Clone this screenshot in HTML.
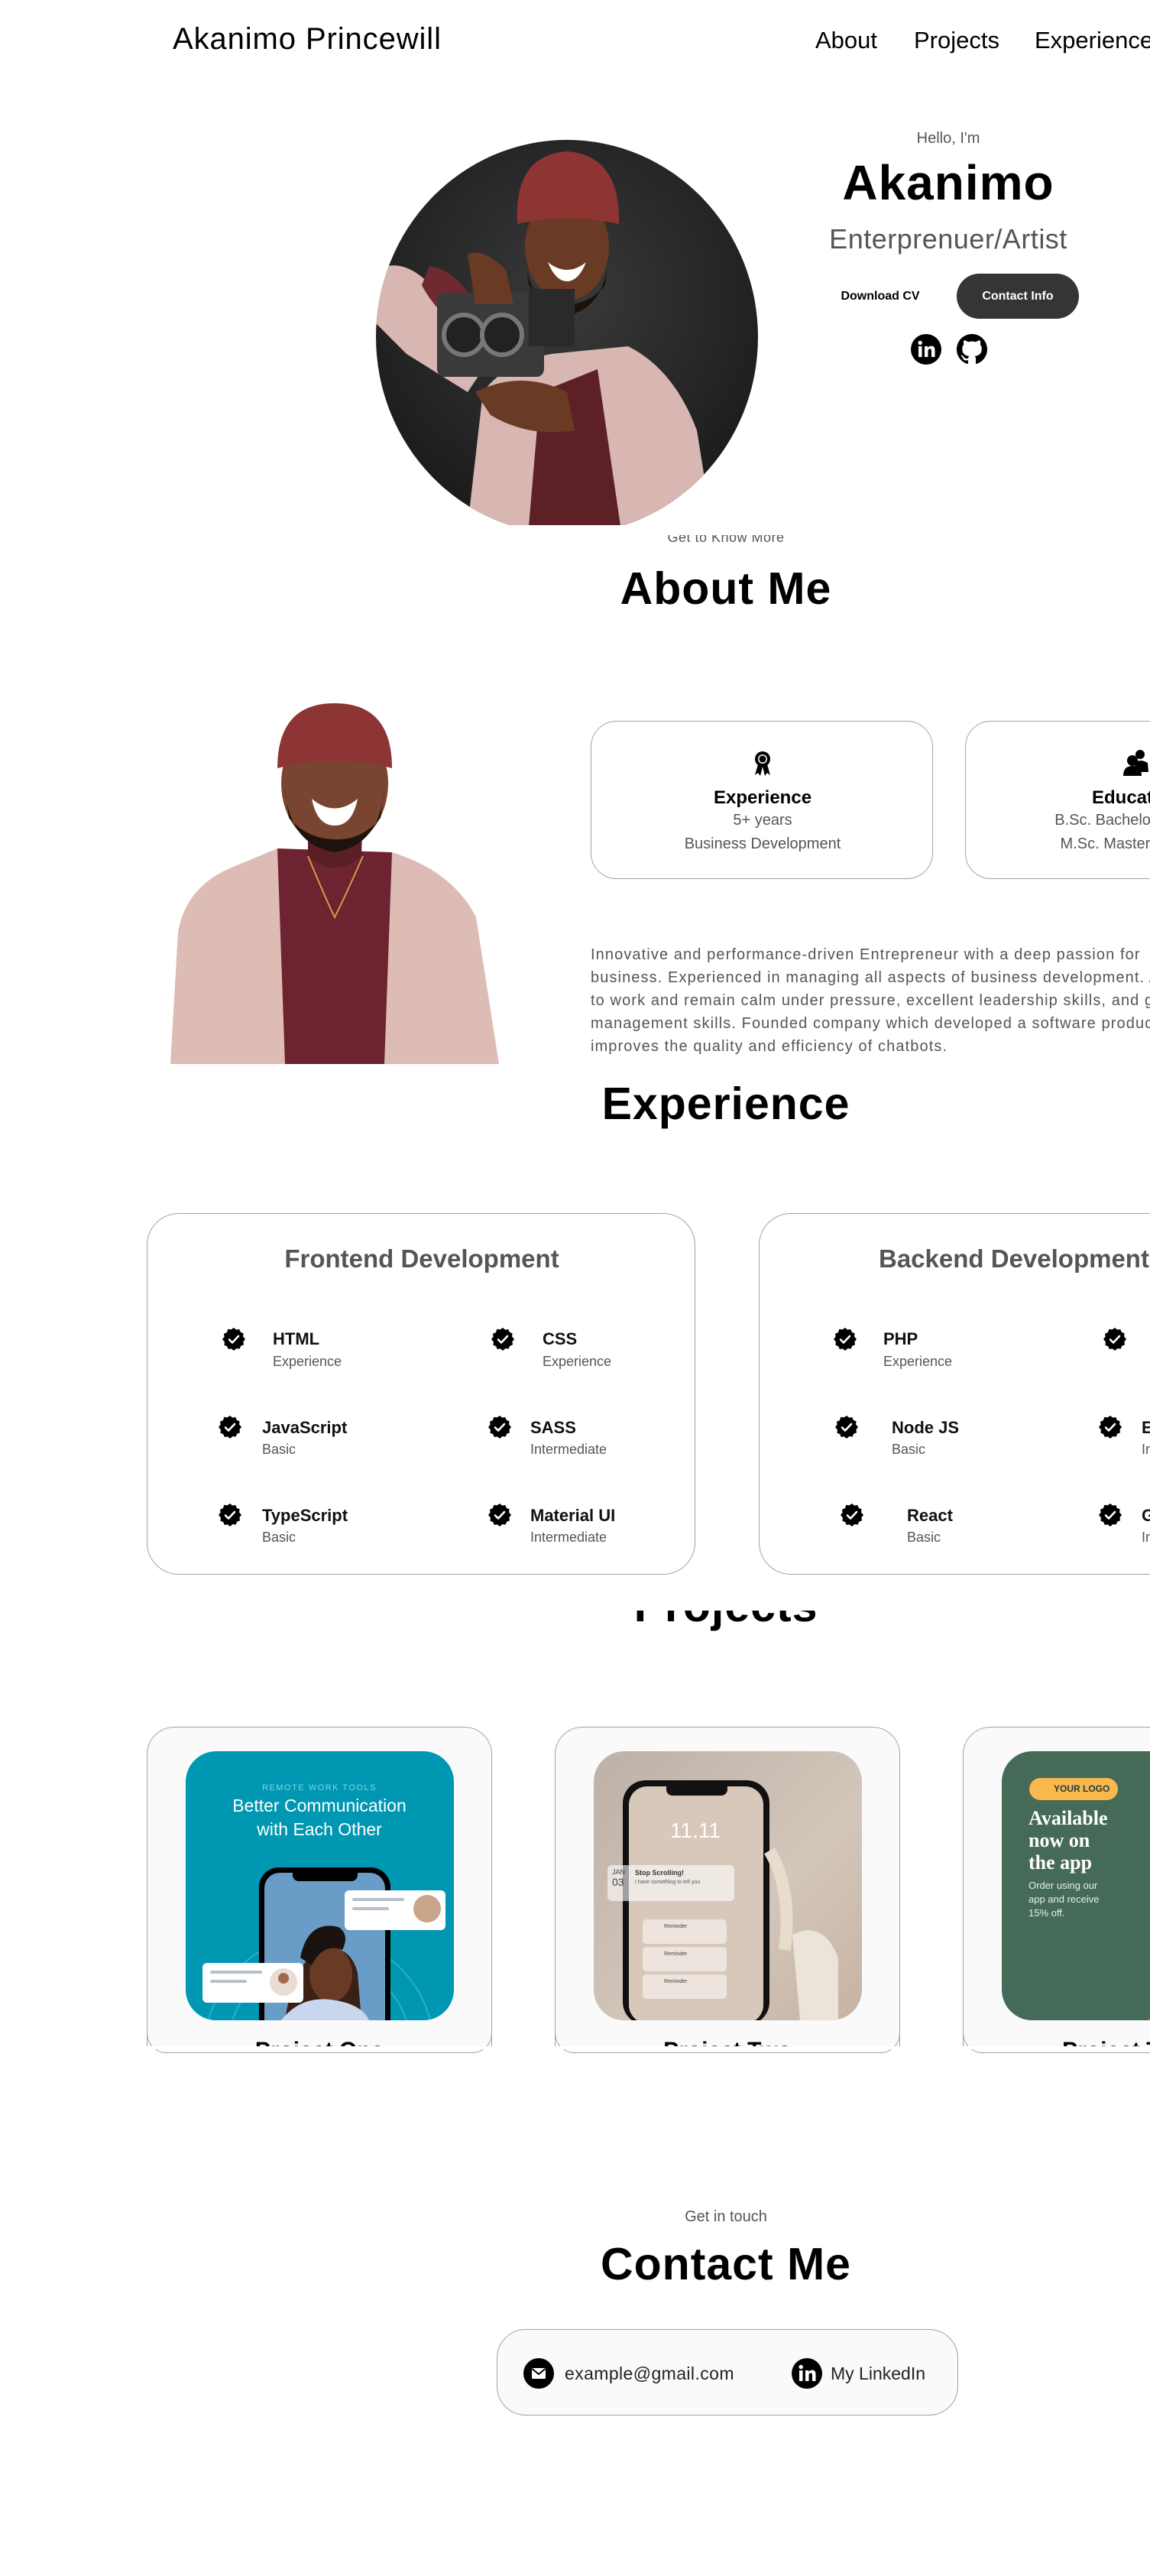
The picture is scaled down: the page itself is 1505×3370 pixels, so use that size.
<!DOCTYPE html>
<html><head><meta charset="utf-8">
<style>
*{margin:0;padding:0;box-sizing:border-box}
html,body{width:1505px;height:3370px;overflow:hidden;background:#fff;font-family:"Liberation Sans",sans-serif;color:#000}
.a{position:absolute;white-space:nowrap}
.c{transform:translateX(-50%);text-align:center}
.g{color:#555}
.card{position:absolute;border:1.5px solid #a3a3a3;border-radius:32px;background:#fff}
.chk{position:absolute;width:30px;height:30px}
.it{position:absolute;font-size:22px;font-weight:bold;color:#111}
.sub{position:absolute;font-size:18px;color:#555}
.h2{font-size:59px;font-weight:bold;letter-spacing:1px}
.pc{position:absolute;top:2259px;width:452px;height:418px;border:1.5px solid #a3a3a3;border-bottom:none;border-radius:36px 36px 0 0;background:#fafafa;overflow:hidden}
.pb{position:absolute;top:2660px;width:452px;height:26px;border:1.5px solid #a3a3a3;border-top:none;border-radius:0 0 36px 36px}
.pimg{position:absolute;left:50px;top:31px;width:351px;height:352px;border-radius:40px;overflow:hidden}
.pt{position:absolute;left:0;width:100%;text-align:center;top:406px;font-size:30px;font-weight:bold}
</style></head><body>

<!-- NAV -->
<div class="a" style="left:226px;top:29px;font-size:40px;letter-spacing:0.9px">Akanimo Princewill</div>
<div class="a" style="left:1067px;top:35px;font-size:31px">About</div>
<div class="a" style="left:1196px;top:35px;font-size:31px">Projects</div>
<div class="a" style="left:1354px;top:35px;font-size:31px">Experience</div>

<!-- HERO IMAGE -->
<svg class="a" style="left:492px;top:183px" width="500" height="504" viewBox="0 0 500 504">
<defs><clipPath id="cc"><ellipse cx="250" cy="258" rx="250" ry="258"/></clipPath>
<radialGradient id="bg" cx="50%" cy="40%" r="60%"><stop offset="0" stop-color="#3a3a3a"/><stop offset="1" stop-color="#1c1c1c"/></radialGradient></defs>
<g clip-path="url(#cc)">
<rect width="500" height="504" fill="url(#bg)"/>
<path d="M120 505 L140 330 Q170 290 230 280 L330 270 Q390 300 420 380 L440 505Z" fill="#d8b7b3"/>
<path d="M200 505 L215 330 L290 300 L320 505Z" fill="#5e2027"/>
<path d="M0 170 Q40 150 80 200 L140 300 L120 330 L40 280 L0 240Z" fill="#d8b7b3"/>
<path d="M70 165 Q100 170 120 200 L90 230 Q70 210 60 190Z" fill="#6e2a30"/>
<ellipse cx="250" cy="140" rx="55" ry="70" fill="#6a3b24"/>
<path d="M195 150 Q200 220 250 230 Q300 220 305 150 L300 190 Q280 215 250 215 Q220 215 200 190Z" fill="#1c120c"/>
<path d="M225 160 Q250 180 275 160 Q265 185 250 185 Q235 185 225 160Z" fill="#fff"/>
<path d="M185 110 Q180 20 250 15 Q320 20 318 110 Q250 95 185 110Z" fill="#8e3433"/>
<rect x="80" y="200" width="140" height="110" rx="10" fill="#3a3a3a"/>
<circle cx="115" cy="255" r="26" fill="#222" stroke="#777" stroke-width="6"/>
<circle cx="165" cy="255" r="26" fill="#222" stroke="#777" stroke-width="6"/>
<rect x="200" y="195" width="60" height="75" fill="#2a2a2a"/>
<path d="M130 330 Q190 300 250 330 L260 380 Q200 390 150 360Z" fill="#6a3b24"/>
<path d="M120 150 Q140 140 170 170 L180 215 L130 215Z" fill="#6a3b24"/>
</g></svg>

<div class="a c g" style="left:1241px;top:170px;font-size:20px">Hello, I'm</div>
<div class="a c" style="left:1241px;top:202px;font-size:64px;font-weight:bold;letter-spacing:1px">Akanimo</div>
<div class="a c g" style="left:1241px;top:292px;font-size:36px;letter-spacing:0.5px">Enterprenuer/Artist</div>
<div class="a c" style="left:1152px;top:379px;font-size:16px;font-weight:bold">Download CV</div>
<div class="a" style="left:1252px;top:358px;width:160px;height:59px;border-radius:30px;background:#353535;color:#fff;font-weight:bold;font-size:16px;line-height:59px;text-align:center">Contact Info</div>
<svg class="a" style="left:1192px;top:437px" width="40" height="40" viewBox="0 0 40 40"><circle cx="20" cy="20" r="20"/><rect x="10" y="16" width="4.5" height="14" fill="#fff"/><circle cx="12.2" cy="11.5" r="2.7" fill="#fff"/><path d="M18 16h4.3v2c1-1.6 2.6-2.4 4.6-2.4 3.4 0 4.6 2.2 4.6 5.6V30h-4.5v-7.8c0-1.8-.5-2.8-2-2.8-1.7 0-2.5 1.2-2.5 3V30H18Z" fill="#fff"/></svg>
<svg class="a" style="left:1252px;top:437px" width="40" height="40" viewBox="0 0 16 16"><path d="M8 0C3.58 0 0 3.58 0 8c0 3.54 2.290 6.530 5.47 7.590.4.07.55-.17.55-.38 0-.19-.01-.82-.01-1.49-2.010.37-2.530-.49-2.690-.94-.09-.23-.48-.94-.82-1.130-.28-.15-.68-.52-.01-.53.63-.01 1.080.58 1.230.82.72 1.210 1.870.87 2.330.66.07-.52.28-.87.51-1.070-1.780-.2-3.640-.89-3.640-3.950 0-.87.31-1.590.82-2.150-.08-.2-.36-1.020.08-2.120 0 0 .67-.21 2.200.82.64-.18 1.320-.27 2-.27.68 0 1.360.09 2 .27 1.530-1.040 2.200-.82 2.200-.82.44 1.100.16 1.920.08 2.120.51.56.82 1.270.82 2.150 0 3.070-1.870 3.750-3.650 3.950.29.25.54.73.54 1.480 0 1.070-.01 1.930-.01 2.200 0 .21.15.46.55.38A8.013 8.013 0 0016 8c0-4.420-3.580-8-8-8z"/></svg>

<!-- ABOUT -->
<div class="a" style="left:700px;top:700px;width:500px;height:28px;overflow:hidden"><div class="a c g" style="left:250px;top:-7px;font-size:18px;letter-spacing:0.5px">Get to Know More</div></div>
<div class="a c h2" style="left:950px;top:736px">About Me</div>

<svg class="a" style="left:213px;top:920px" width="440" height="472" viewBox="0 0 440 472">
<path d="M10 472 L20 300 Q30 240 90 215 L150 190 L300 195 Q380 220 410 280 L440 472Z" fill="#dcbcb4"/>
<path d="M150 190 L160 472 L290 472 L300 195Z" fill="#6d2330"/>
<path d="M190 130 L190 200 Q225 230 260 200 L262 130Z" fill="#5a1e27"/>
<ellipse cx="225" cy="105" rx="70" ry="85" fill="#7a4530"/>
<path d="M160 110 Q165 185 225 195 Q285 185 290 110 L285 150 Q260 180 225 178 Q190 178 165 150Z" fill="#1e130d"/>
<path d="M195 125 Q225 150 255 125 Q248 160 225 160 Q202 160 195 125Z" fill="#fff"/>
<path d="M150 85 Q150 0 225 0 Q300 0 300 85 Q225 65 150 85Z" fill="#8c3534"/>
<path d="M190 200 Q215 260 225 280 Q240 250 262 200" fill="none" stroke="#c9a14a" stroke-width="2"/>
</svg>

<div class="card" style="left:773px;top:943px;width:448px;height:207px;border-radius:34px">
<svg class="a c" style="left:224px;top:38px" width="22" height="34" viewBox="0 0 22 34"><circle cx="11" cy="11" r="10"/><circle cx="11" cy="11" r="6" fill="#fff"/><circle cx="11" cy="11" r="4.5"/><path d="M5 18 L1 32 L5 29 L8 33 L11 21 L14 33 L17 29 L21 32 L17 18Z"/></svg>
<div class="a c" style="left:224px;top:86px;font-size:24px;font-weight:bold">Experience</div>
<div class="a c g" style="left:224px;top:118px;font-size:20px">5+ years</div>
<div class="a c g" style="left:224px;top:149px;font-size:20px">Business Development</div>
</div>
<div class="card" style="left:1263px;top:943px;width:448px;height:207px;border-radius:34px">
<svg class="a c" style="left:223px;top:36px" width="34" height="36" viewBox="0 0 34 36"><circle cx="22" cy="7" r="6"/><path d="M14 18 Q22 12 32 18 L33 30 L18 30Z"/><circle cx="12" cy="15" r="7"/><path d="M0 35 Q0 22 12 22 Q24 22 24 35Z"/></svg>
<div class="a c" style="left:223px;top:86px;font-size:24px;font-weight:bold">Education</div>
<div class="a c g" style="left:223px;top:118px;font-size:20px">B.Sc. Bachelors Degree</div>
<div class="a c g" style="left:223px;top:149px;font-size:20px">M.Sc. Masters Degree</div>
</div>

<div class="a g" style="left:773px;top:1234px;font-size:20px;letter-spacing:1.1px;line-height:30px">Innovative and performance-driven Entrepreneur with a deep passion for<br>business. Experienced in managing all aspects of business development. Ability<br>to work and remain calm under pressure, excellent leadership skills, and good<br>management skills. Founded company which developed a software product that<br>improves the quality and efficiency of chatbots.</div>

<div class="a c h2" style="left:950px;top:1410px">Experience</div>

<!-- SKILLS -->
<svg width="0" height="0" style="position:absolute"><defs><g id="ck"><path d="M15 0l3.2 2.6 4-.6 1.6 3.8 3.8 1.6-.6 4L30 15l-2.6 3.2.6 4-3.8 1.6-1.6 3.8-4-.6L15 30l-3.2-2.6-4 .6-1.6-3.8-3.8-1.6.6-4L0 15l2.6-3.2-.6-4 3.8-1.6L7.4 1.8l4 .6Z"/><path d="M9 15.5l4 4 8-8.5" fill="none" stroke="#fff" stroke-width="2.6" stroke-linecap="round" stroke-linejoin="round"/></g></defs></svg>

<div class="card" style="left:192px;top:1587px;width:718px;height:473px;border-radius:42px"></div>
<div class="a c g" style="left:552px;top:1628px;font-size:33px;font-weight:bold">Frontend Development</div>
<svg class="chk" style="left:291px;top:1737px"><use href="#ck"/></svg><div class="it" style="left:357px;top:1739px">HTML</div><div class="sub" style="left:357px;top:1771px">Experience</div>
<svg class="chk" style="left:643px;top:1737px"><use href="#ck"/></svg><div class="it" style="left:710px;top:1739px">CSS</div><div class="sub" style="left:710px;top:1771px">Experience</div>
<svg class="chk" style="left:286px;top:1852px"><use href="#ck"/></svg><div class="it" style="left:343px;top:1855px">JavaScript</div><div class="sub" style="left:343px;top:1886px">Basic</div>
<svg class="chk" style="left:639px;top:1852px"><use href="#ck"/></svg><div class="it" style="left:694px;top:1855px">SASS</div><div class="sub" style="left:694px;top:1886px">Intermediate</div>
<svg class="chk" style="left:286px;top:1967px"><use href="#ck"/></svg><div class="it" style="left:343px;top:1970px">TypeScript</div><div class="sub" style="left:343px;top:2001px">Basic</div>
<svg class="chk" style="left:639px;top:1967px"><use href="#ck"/></svg><div class="it" style="left:694px;top:1970px">Material UI</div><div class="sub" style="left:694px;top:2001px">Intermediate</div>

<div class="card" style="left:993px;top:1587px;width:718px;height:473px;border-radius:42px"></div>
<div class="a g" style="left:1150px;top:1628px;font-size:33px;font-weight:bold">Backend Development</div>
<svg class="chk" style="left:1091px;top:1737px"><use href="#ck"/></svg><div class="it" style="left:1156px;top:1739px">PHP</div><div class="sub" style="left:1156px;top:1771px">Experience</div>
<svg class="chk" style="left:1444px;top:1737px"><use href="#ck"/></svg>
<svg class="chk" style="left:1093px;top:1852px"><use href="#ck"/></svg><div class="it" style="left:1167px;top:1855px">Node JS</div><div class="sub" style="left:1167px;top:1886px">Basic</div>
<svg class="chk" style="left:1438px;top:1852px"><use href="#ck"/></svg><div class="it" style="left:1494px;top:1855px">Express</div><div class="sub" style="left:1494px;top:1886px">Intermediate</div>
<svg class="chk" style="left:1100px;top:1967px"><use href="#ck"/></svg><div class="it" style="left:1187px;top:1970px">React</div><div class="sub" style="left:1187px;top:2001px">Basic</div>
<svg class="chk" style="left:1438px;top:1967px"><use href="#ck"/></svg><div class="it" style="left:1494px;top:1970px">Git</div><div class="sub" style="left:1494px;top:2001px">Intermediate</div>

<!-- PROJECTS heading (clipped) -->
<div class="a" style="left:700px;top:2107px;width:500px;height:45px;overflow:hidden"><div class="a c h2" style="left:250px;top:-40px">Projects</div></div>

<!-- PROJECT CARDS -->
<div class="pc" style="left:192px">
 <div class="pimg" style="background:#0097b2">
  <div class="a c" style="left:175px;top:42px;font-size:11px;letter-spacing:1.5px;color:#7fd6e4">REMOTE WORK TOOLS</div>
  <div class="a c" style="left:175px;top:56px;font-size:23px;color:#fff;text-align:center;line-height:31px">Better Communication<br>with Each Other</div>
  <svg class="a" style="left:0;top:140px" width="351" height="212" viewBox="0 0 351 212">
   <circle cx="175" cy="250" r="150" fill="none" stroke="#2eaec4" stroke-width="2"/>
   <circle cx="175" cy="250" r="120" fill="none" stroke="#2eaec4" stroke-width="2"/>
   <rect x="96" y="12" width="172" height="230" rx="26" fill="#000"/>
   <rect x="103" y="19" width="158" height="220" rx="20" fill="#6a9cc8"/>
   <rect x="140" y="12" width="85" height="18" rx="8" fill="#000"/>
   <path d="M130 212 Q140 140 175 120 Q215 110 225 150 L230 212Z" fill="#3b2015"/>
   <ellipse cx="190" cy="152" rx="28" ry="36" fill="#6a3b24"/>
   <path d="M150 130 Q160 80 200 90 Q215 100 205 120 Q180 110 165 140Z" fill="#1a120e"/>
   <path d="M125 212 Q150 180 190 185 Q230 190 240 212Z" fill="#c9d7ee"/>
   <rect x="208" y="42" width="132" height="52" rx="6" fill="#fff"/>
   <rect x="218" y="52" width="68" height="4" rx="2" fill="#b8c0cc"/><rect x="218" y="64" width="48" height="4" rx="2" fill="#b8c0cc"/>
   <circle cx="316" cy="66" r="18" fill="#c9a58a"/>
   <rect x="22" y="137" width="132" height="52" rx="6" fill="#fff"/>
   <rect x="32" y="147" width="68" height="4" rx="2" fill="#b8c0cc"/><rect x="32" y="159" width="48" height="4" rx="2" fill="#b8c0cc"/>
   <circle cx="128" cy="162" r="18" fill="#e8dcd4"/><circle cx="128" cy="157" r="7" fill="#a06a50"/>
  </svg>
 </div>
 <div class="pt">Project One</div>
</div>
<div class="pb" style="left:192px"></div>

<div class="pc" style="left:726px">
 <div class="pimg" style="background:linear-gradient(135deg,#bdb1a8,#d3c6ba 60%,#c6b3a3)">
  <svg class="a" style="left:0;top:0" width="351" height="352" viewBox="0 0 351 352">
   <rect x="38" y="38" width="192" height="320" rx="30" fill="#111"/>
   <rect x="46" y="46" width="176" height="310" rx="24" fill="#d8c8ba"/>
   <rect x="95" y="40" width="80" height="18" rx="8" fill="#111"/>
   <path d="M230 130 Q260 180 250 260" stroke="#e8dccd" stroke-width="16" fill="none"/>
   <path d="M260 240 Q300 220 320 270 L320 352 L270 352Z" fill="#ece3d9"/>
   <rect x="18" y="149" width="166" height="47" rx="6" fill="rgba(255,255,255,.6)"/>
   <rect x="64" y="220" width="110" height="32" rx="5" fill="rgba(255,255,255,.5)"/>
   <rect x="64" y="256" width="110" height="32" rx="5" fill="rgba(255,255,255,.5)"/>
   <rect x="64" y="292" width="110" height="32" rx="5" fill="rgba(255,255,255,.5)"/>
  </svg>
  <div class="a c" style="left:133px;top:88px;font-size:28px;color:#fff">11.11</div>
  <div class="a" style="left:24px;top:152px;font-size:9px;color:#444;line-height:13px">JAN<br><span style="font-size:14px">03</span></div>
  <div class="a" style="left:54px;top:154px;font-size:9px;font-weight:bold;color:#333">Stop Scrolling!</div>
  <div class="a" style="left:54px;top:168px;font-size:7px;color:#555">I have something to tell you</div>
  <div class="a" style="left:92px;top:226px;font-size:7px;color:#444">Reminder</div>
  <div class="a" style="left:92px;top:262px;font-size:7px;color:#444">Reminder</div>
  <div class="a" style="left:92px;top:298px;font-size:7px;color:#444">Reminder</div>
 </div>
 <div class="pt">Project Two</div>
</div>
<div class="pb" style="left:726px"></div>

<div class="pc" style="left:1260px">
 <div class="pimg" style="background:#456a58">
  <div class="a" style="left:36px;top:35px;width:116px;height:29px;border-radius:15px;background:#f8b84e;font-size:12px;font-weight:bold;color:#2b3a30;line-height:29px;padding-left:32px">YOUR LOGO</div>
  <div class="a" style="left:35px;top:73px;font-size:26px;font-weight:bold;color:#fff;line-height:29px;font-family:'Liberation Serif',serif">Available<br>now on<br>the app</div>
  <div class="a" style="left:35px;top:167px;font-size:13px;color:#e8efe9;line-height:18px">Order using our<br>app and receive<br>15% off.</div>
  <svg class="a" style="left:190px;top:30px" width="161" height="322" viewBox="0 0 161 322"><path d="M30 0 L161 0 L161 300 L20 280 Z" fill="#111" transform="rotate(4 80 150)"/><rect x="40" y="20" width="121" height="240" fill="#2e2e2e"/><ellipse cx="70" cy="150" rx="18" ry="24" fill="#f5f0e0"/><ellipse cx="70" cy="155" rx="10" ry="12" fill="#f0b23a"/><path d="M0 322 L60 250 L161 280 L161 322Z" fill="#8a6440"/></svg>
 </div>
 <div class="pt">Project Three</div>
</div>
<div class="pb" style="left:1260px"></div>
<div class="a" style="left:180px;top:2660px;width:1325px;height:17px;background:transparent"></div>
<div class="a" style="left:180px;top:2677px;width:1325px;height:4px;background:#fff"></div>

<!-- CONTACT -->
<div class="a c g" style="left:950px;top:2889px;font-size:20px">Get in touch</div>
<div class="a c h2" style="left:950px;top:2928px">Contact Me</div>
<div class="a" style="left:650px;top:3047px;width:604px;height:113px;border:1.5px solid #a3a3a3;border-radius:38px;background:#fafafa"></div>
<svg class="a" style="left:685px;top:3085px" width="40" height="40" viewBox="0 0 40 40"><circle cx="20" cy="20" r="20"/><rect x="11" y="13" width="18" height="14" rx="1.5" fill="#fff"/><path d="M11.5 14l8.5 7 8.5-7" fill="none" stroke="#000" stroke-width="2"/></svg>
<div class="a" style="left:739px;top:3092px;font-size:23px;color:#222;letter-spacing:0.4px">example@gmail.com</div>
<svg class="a" style="left:1036px;top:3085px" width="40" height="40" viewBox="0 0 40 40"><circle cx="20" cy="20" r="20"/><rect x="10" y="16" width="4.5" height="14" fill="#fff"/><circle cx="12.2" cy="11.5" r="2.7" fill="#fff"/><path d="M18 16h4.3v2c1-1.6 2.6-2.4 4.6-2.4 3.4 0 4.6 2.2 4.6 5.6V30h-4.5v-7.8c0-1.8-.5-2.8-2-2.8-1.7 0-2.5 1.2-2.5 3V30H18Z" fill="#fff"/></svg>
<div class="a" style="left:1087px;top:3092px;font-size:23px;color:#222">My LinkedIn</div>

</body></html>
